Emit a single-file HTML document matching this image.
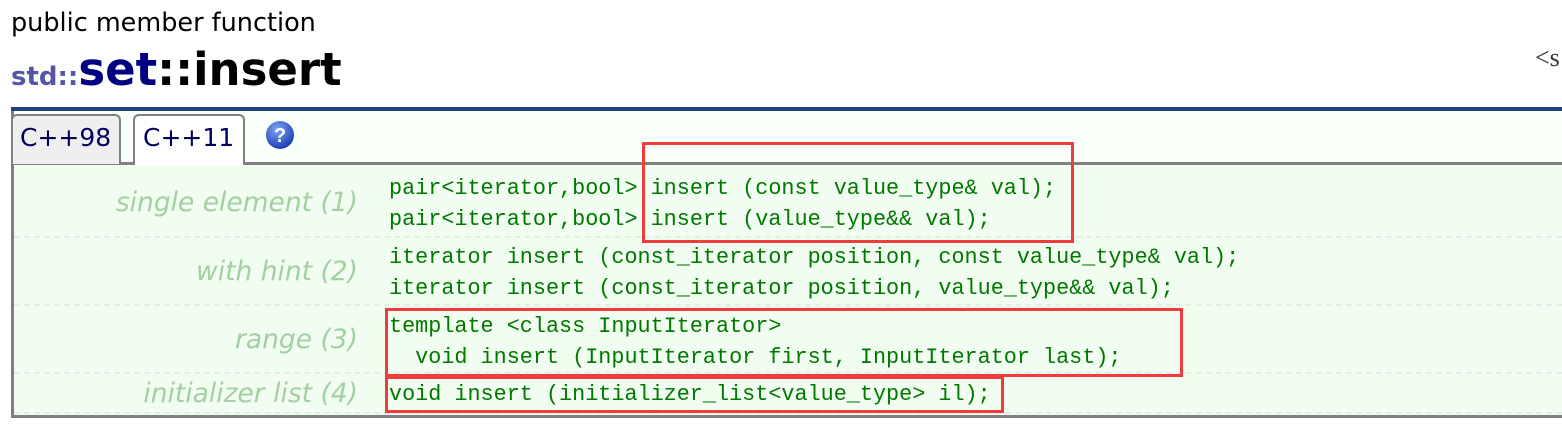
<!DOCTYPE html>
<html><head><meta charset="utf-8"><style>
body{margin:0;width:1562px;height:436px;background:#fff;position:relative;overflow:hidden;font-family:"DejaVu Sans","Liberation Sans",sans-serif}
.a{position:absolute;white-space:nowrap}
.code{font-family:"Liberation Mono",monospace;font-size:21.8px;color:#007800;line-height:31px;white-space:pre}
.lab{font-style:italic;color:#a3cfa3;font-size:26.5px;text-align:right;width:350px;left:8px}
.sep{position:absolute;left:14px;right:0;border-top:2px dashed #e6ece6;height:0}
.red{position:absolute;border:3px solid #ee3b3b}
</style></head><body>
<div class="a" style="left:11px;top:8px;font-size:25.5px;color:#000">public member function</div>
<div class="a" style="left:11px;top:42px;font-weight:bold;line-height:56px">
<span style="font-size:26px;color:#5555a5">std::</span><span style="font-size:45px;color:#000080">set</span><span style="font-size:45px;color:#000">::insert</span></div>
<div class="a" style="left:1535px;top:43px;font-family:'Liberation Serif',serif;font-size:26px;color:#333">&lt;s</div>
<div class="a" style="left:11px;top:107px;width:1551px;height:4px;background:#21407e"></div>
<div class="a" style="left:11px;top:111px;width:1551px;height:307px;background:#f9fff9;border-left:3px solid #808080;border-bottom:3px solid #808080;box-sizing:border-box"></div>
<div class="a" style="left:14px;top:165px;width:1548px;height:250px;background:#f2fdf2"></div>
<div class="a" style="left:11px;top:162px;width:1551px;height:3px;background:#808080"></div>
<div class="a" style="left:11px;top:114px;width:110px;height:50px;background:#efefef;border:2px solid #808080;border-bottom:none;border-radius:6px 6px 0 0;box-sizing:border-box;font-size:25px;color:#000060;padding:7px 0 0 7px">C++98</div>
<div class="a" style="left:133px;top:114px;width:112px;height:51px;background:#fff;border:2px solid #808080;border-bottom:none;border-radius:6px 6px 0 0;box-sizing:border-box;font-size:25px;color:#000060;padding:7px 0 0 8px">C++11</div>
<svg class="a" style="left:264px;top:119px" width="32" height="32"><defs><radialGradient id="g" cx="40%" cy="30%" r="70%"><stop offset="0" stop-color="#7fa6f0"/><stop offset="1" stop-color="#1d3fb5"/></radialGradient></defs><circle cx="16" cy="16" r="14" fill="url(#g)"/><text x="16" y="23" text-anchor="middle" font-family="Liberation Sans" font-weight="bold" font-size="20" fill="#fff">?</text></svg>
<div class="sep" style="top:236px"></div>
<div class="sep" style="top:304px"></div>
<div class="sep" style="top:372px"></div>
<div class="sep" style="top:412px"></div>
<div class="a lab" style="top:187px">single element (1)</div>
<div class="a lab" style="top:256px">with hint (2)</div>
<div class="a lab" style="top:324px">range (3)</div>
<div class="a lab" style="top:378px">initializer list (4)</div>
<div class="a code" style="left:389px;top:173px">pair&lt;iterator,bool&gt; insert (const value_type&amp; val);
pair&lt;iterator,bool&gt; insert (value_type&amp;&amp; val);</div>
<div class="a code" style="left:389px;top:242px">iterator insert (const_iterator position, const value_type&amp; val);
iterator insert (const_iterator position, value_type&amp;&amp; val);</div>
<div class="a code" style="left:389px;top:311px">template &lt;class InputIterator&gt;
  void insert (InputIterator first, InputIterator last);</div>
<div class="a code" style="left:389px;top:379px">void insert (initializer_list&lt;value_type&gt; il);</div>
<div class="red" style="left:642px;top:142px;width:426px;height:95px"></div>
<div class="red" style="left:385px;top:308px;width:792px;height:63px"></div>
<div class="red" style="left:385px;top:376px;width:613px;height:31px"></div>
</body></html>
